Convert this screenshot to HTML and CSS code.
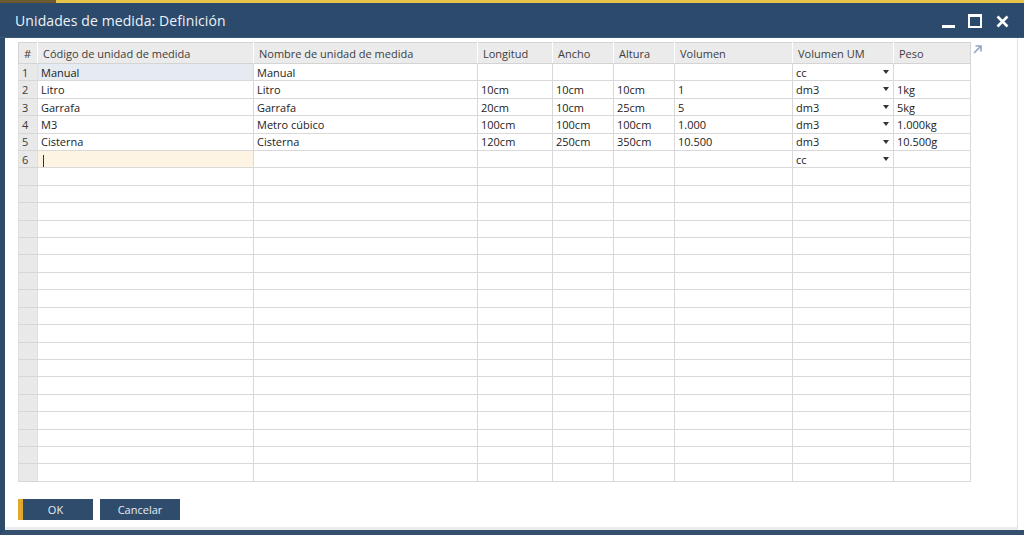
FILE: index.html
```html
<!DOCTYPE html>
<html lang="es">
<head>
<meta charset="utf-8">
<title>Unidades de medida: Definición</title>
<link rel="stylesheet" href="styles.css">
</head>
<body>
<div class="window">
  <div class="topline"><span class="topline-dark"></span></div>
  <div class="titlebar">
    <span class="title">Unidades de medida: Definición</span>
    <div class="controls">
      <span class="ctl ctl-min"></span>
      <span class="ctl ctl-max"></span>
      <svg class="ctl-close" width="13" height="13" viewBox="0 0 13 13"><path d="M1.5 1.5 L11.5 11.5 M11.5 1.5 L1.5 11.5" stroke="#fff" stroke-width="2.6" stroke-linecap="butt"/></svg>
    </div>
  </div>
  <div class="content">
    <div class="grid-row">
      <table class="grid">
        <colgroup>
          <col style="width:19px"><col style="width:216px"><col style="width:224px"><col style="width:75px"><col style="width:61px"><col style="width:61px"><col style="width:118px"><col style="width:101px"><col style="width:77px">
        </colgroup>
        <thead>
          <tr><th class="num">#</th><th>Código de unidad de medida</th><th>Nombre de unidad de medida</th><th>Longitud</th><th>Ancho</th><th>Altura</th><th>Volumen</th><th>Volumen UM</th><th>Peso</th></tr>
        </thead>
        <tbody id="rows">
          <tr><td class="num">1</td><td class="sel">Manual</td><td>Manual</td><td></td><td></td><td></td><td></td><td class="dd">cc<span class="arrow"></span></td><td></td></tr>
          <tr><td class="num">2</td><td>Litro</td><td>Litro</td><td>10cm</td><td>10cm</td><td>10cm</td><td>1</td><td class="dd">dm3<span class="arrow"></span></td><td>1kg</td></tr>
          <tr><td class="num">3</td><td>Garrafa</td><td>Garrafa</td><td>20cm</td><td>10cm</td><td>25cm</td><td>5</td><td class="dd">dm3<span class="arrow"></span></td><td>5kg</td></tr>
          <tr><td class="num">4</td><td>M3</td><td>Metro cúbico</td><td>100cm</td><td>100cm</td><td>100cm</td><td>1.000</td><td class="dd">dm3<span class="arrow"></span></td><td>1.000kg</td></tr>
          <tr><td class="num">5</td><td>Cisterna</td><td>Cisterna</td><td>120cm</td><td>250cm</td><td>350cm</td><td>10.500</td><td class="dd">dm3<span class="arrow"></span></td><td>10.500g</td></tr>
          <tr><td class="num">6</td><td class="edit"><span class="caret"></span></td><td></td><td></td><td></td><td></td><td></td><td class="dd">cc<span class="arrow"></span></td><td></td></tr>
          <tr><td class="num"></td><td></td><td></td><td></td><td></td><td></td><td></td><td></td><td></td></tr>
          <tr><td class="num"></td><td></td><td></td><td></td><td></td><td></td><td></td><td></td><td></td></tr>
          <tr><td class="num"></td><td></td><td></td><td></td><td></td><td></td><td></td><td></td><td></td></tr>
          <tr><td class="num"></td><td></td><td></td><td></td><td></td><td></td><td></td><td></td><td></td></tr>
          <tr><td class="num"></td><td></td><td></td><td></td><td></td><td></td><td></td><td></td><td></td></tr>
          <tr><td class="num"></td><td></td><td></td><td></td><td></td><td></td><td></td><td></td><td></td></tr>
          <tr><td class="num"></td><td></td><td></td><td></td><td></td><td></td><td></td><td></td><td></td></tr>
          <tr><td class="num"></td><td></td><td></td><td></td><td></td><td></td><td></td><td></td><td></td></tr>
          <tr><td class="num"></td><td></td><td></td><td></td><td></td><td></td><td></td><td></td><td></td></tr>
          <tr><td class="num"></td><td></td><td></td><td></td><td></td><td></td><td></td><td></td><td></td></tr>
          <tr><td class="num"></td><td></td><td></td><td></td><td></td><td></td><td></td><td></td><td></td></tr>
          <tr><td class="num"></td><td></td><td></td><td></td><td></td><td></td><td></td><td></td><td></td></tr>
          <tr><td class="num"></td><td></td><td></td><td></td><td></td><td></td><td></td><td></td><td></td></tr>
          <tr><td class="num"></td><td></td><td></td><td></td><td></td><td></td><td></td><td></td><td></td></tr>
          <tr><td class="num"></td><td></td><td></td><td></td><td></td><td></td><td></td><td></td><td></td></tr>
          <tr><td class="num"></td><td></td><td></td><td></td><td></td><td></td><td></td><td></td><td></td></tr>
          <tr><td class="num"></td><td></td><td></td><td></td><td></td><td></td><td></td><td></td><td></td></tr>
          <tr><td class="num"></td><td></td><td></td><td></td><td></td><td></td><td></td><td></td><td></td></tr>
        </tbody>
      </table>
      <svg class="expand" width="11" height="11" viewBox="0 0 11 11"><path d="M2 9 L9 2 M3.5 2 H9 V7.5" fill="none" stroke="#8fa6c0" stroke-width="1.6"/></svg>
    </div>
    <div class="buttons">
      <button class="btn btn-ok">OK</button>
      <button class="btn">Cancelar</button>
    </div>
  </div>
</div>
</body>
</html>
```

FILE: styles.css
```css
html, body {
  margin: 0;
  padding: 0;
  background: #ffffff;
}
body {
  width: 1024px;
  height: 535px;
  overflow: hidden;
  font-family: "Open Sans", "Liberation Sans", sans-serif;
}
.window {
  width: 1024px;
  height: 535px;
  box-sizing: border-box;
  display: flex;
  flex-direction: column;
  border-left: 5px solid #2e4a69;
  border-bottom: 5px solid #34506f;
  background: #ffffff;
}
.topline {
  height: 3px;
  background: #e8c34a;
  margin-left: -5px;
  display: flex;
}
.topline-dark {
  width: 56px;
  background: #6b5a2e;
}
.titlebar {
  height: 34px;
  background: #2c4a6c;
  display: flex;
  align-items: center;
  justify-content: space-between;
  margin-left: -5px;
  padding: 0 15px 0 15px;
  border-bottom: 1px solid #3b5677;
}
.title {
  color: #eef2f7;
  font-family: "Open Sans", "Liberation Sans", sans-serif;
  font-size: 14px;
  letter-spacing: 0.1px;
  padding-top: 1px;
}
.controls {
  display: flex;
  align-items: center;
  gap: 12px;
  padding-top: 2px;
}
.ctl-min {
  width: 13px;
  height: 3px;
  background: #ffffff;
  margin-top: 10px;
}
.ctl-max {
  width: 10px;
  border: 2px solid #ffffff;
  border-top-width: 3px;
  box-sizing: content-box;
  margin-left: 1px;
  height: 9px;
}
.ctl-close {
  margin-left: 2px;
}
.content {
  flex: 1;
  padding: 4px 0 0 13px;
  border-right: 1px solid #e2e2e2;
  margin-right: 6px;
  border-bottom: 3px solid #ececec;
  display: flex;
  flex-direction: column;
}
.grid-row {
  display: flex;
  align-items: flex-start;
  gap: 1px;
}
.expand {
  margin-top: 2px;
}
.grid {
  border-collapse: collapse;
  table-layout: fixed;
  width: 952px;
  font-family: "Open Sans", "Liberation Sans", sans-serif;
  font-size: 11px;
  color: #222222;
  border: 1px solid #d4d4d4;
}
.grid th {
  height: 20px;
  background: #ebebeb;
  font-weight: normal;
  text-align: left;
  color: #3d3d3d;
  padding: 0 0 0 5px;
  border-left: 1px solid #ffffff;
  border-bottom: 1px solid #d4d4d4;
  white-space: nowrap;
  overflow: hidden;
}
.grid th.num {
  padding-left: 5px;
  border-left: none;
}
.grid td {
  height: 16.42px;
  padding: 0 0 0 3px;
  border: 1px solid #d9d9d9;
  border-top: none;
  white-space: nowrap;
  overflow: hidden;
  line-height: 15px;
  position: relative;
}
.grid td.num {
  background: #e9e9e9;
  padding-left: 3px;
  border-color: #e0e0e0;
  border-bottom-color: #d6d6d6;
  color: #3a3a3a;
}
.grid td.sel {
  background: #e6ebf1;
}
.grid td.edit {
  background: #fdf4e3;
}
.caret {
  display: inline-block;
  width: 1px;
  height: 12px;
  background: #333;
  vertical-align: middle;
  margin-left: 2px;
}
.arrow {
  position: absolute;
  right: 4px;
  top: 6px;
  width: 0;
  height: 0;
  border-left: 3.5px solid transparent;
  border-right: 3.5px solid transparent;
  border-top: 4px solid #333;
}
.buttons {
  display: flex;
  gap: 7px;
  margin-top: 17px;
}
.btn {
  width: 80px;
  height: 21px;
  background: #2f4c6d;
  color: #e8edf3;
  border: none;
  font-family: "Open Sans", "Liberation Sans", sans-serif;
  font-size: 11px;
  padding: 0;
  margin: 0;
}
.btn-ok {
  width: 75px;
  border-left: 5px solid #e3a92c;
  padding-right: 5px;
}
```
